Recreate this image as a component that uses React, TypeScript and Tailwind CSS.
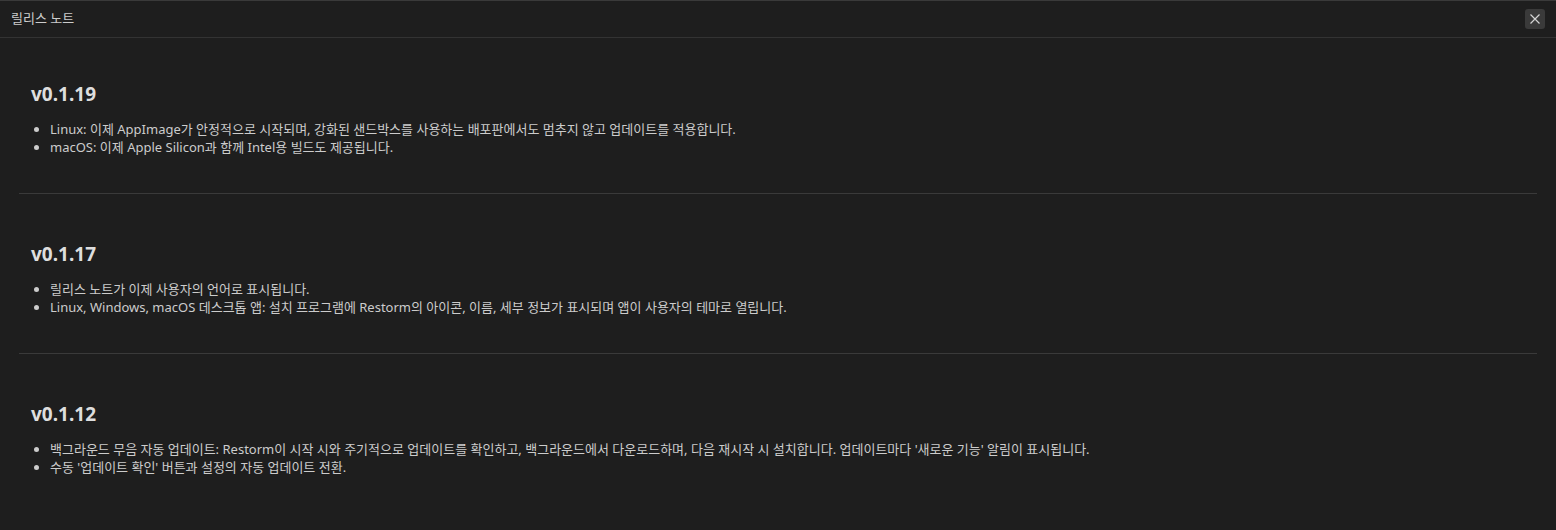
import React from "react";

const sections = [
  {
    v: "v0.1.19",
    items: [
      "Linux: 이제 AppImage가 안정적으로 시작되며, 강화된 샌드박스를 사용하는 배포판에서도 멈추지 않고 업데이트를 적용합니다.",
      "macOS: 이제 Apple Silicon과 함께 Intel용 빌드도 제공됩니다.",
    ],
  },
  {
    v: "v0.1.17",
    items: [
      "릴리스 노트가 이제 사용자의 언어로 표시됩니다.",
      "Linux, Windows, macOS 데스크톱 앱: 설치 프로그램에 Restorm의 아이콘, 이름, 세부 정보가 표시되며 앱이 사용자의 테마로 열립니다.",
    ],
  },
  {
    v: "v0.1.12",
    items: [
      "백그라운드 무음 자동 업데이트: Restorm이 시작 시와 주기적으로 업데이트를 확인하고, 백그라운드에서 다운로드하며, 다음 재시작 시 설치합니다. 업데이트마다 '새로운 기능' 알림이 표시됩니다.",
      "수동 '업데이트 확인' 버튼과 설정의 자동 업데이트 전환.",
    ],
  },
];

export default function App() {
  return (
    <div
      className="w-[1556px] h-[530px] overflow-hidden bg-[#1e1e1e] text-[#cccccc] border-t border-[#3a3a3a]"
      style={{ fontFamily: '"Noto Sans", "Noto Sans CJK KR", sans-serif' }}
    >
      <div className="h-[37px] flex items-center justify-between pl-[11px] pr-[11px] border-b border-[#333333]">
        <span className="text-[13px] text-[#cccccc]">릴리스 노트</span>
        <button className="w-[20px] h-[20px] rounded-[3px] bg-[#3a3a3a] flex items-center justify-center">
          <svg width="12" height="12" viewBox="0 0 12 12" fill="none" stroke="#d4d4d4" strokeWidth="1.2">
            <path d="M1.5 1.5 L10.5 10.5 M10.5 1.5 L1.5 10.5" />
          </svg>
        </button>
      </div>
      <div className="px-[19px]">
        {sections.map((s, i) => (
          <div
            key={s.v}
            className={
              "px-[12px] pb-[37px] " +
              (i === 0 ? "pt-[42px] " : "pt-[46px] ") +
              (i < sections.length - 1 ? "border-b border-[#3a3a3a]" : "")
            }
          >
            <h2 className="text-[19px] leading-[28px] font-bold text-[#dedede]">{s.v}</h2>
            <ul className="mt-[12px] list-disc pl-[19px] text-[13px] leading-[18px]">
              {s.items.map((t) => (
                <li key={t}>{t}</li>
              ))}
            </ul>
          </div>
        ))}
      </div>
    </div>
  );
}
